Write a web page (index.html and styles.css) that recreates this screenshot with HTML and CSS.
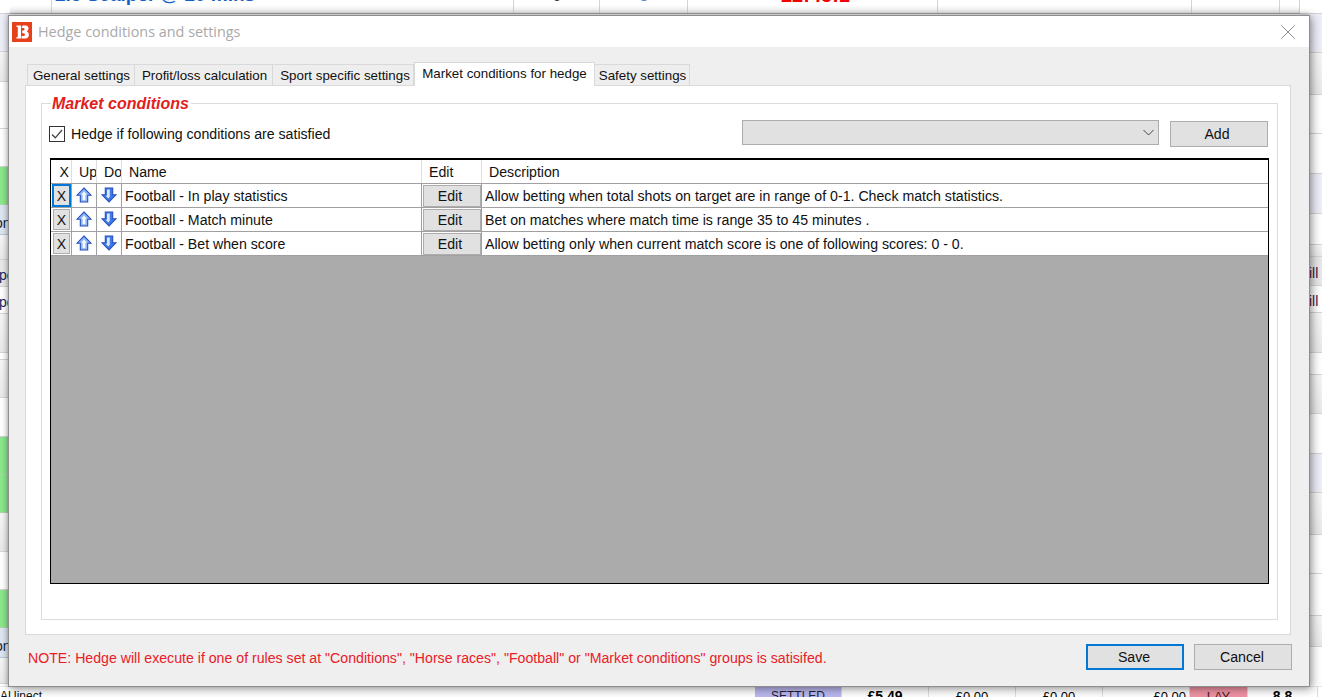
FILE: index.html
```html
<!DOCTYPE html>
<html lang="en">
<head>
<meta charset="utf-8">
<title>Hedge conditions and settings</title>
<link rel="stylesheet" href="styles.css">
</head>
<body>
<div class="desk">
  <div class="desk-main">
    <div class="strip strip-left">
      <div class="band h14 white"></div>
      <div class="band h38 lav"></div>
      <div class="band h30 grad"></div>
      <div class="band h47 white"></div>
      <div class="band h38 white"></div>
      <div class="band h38 green"></div>
      <div class="band h30 blue"><span class="clip-text tl low">on</span></div>
      <div class="band h25 grad"></div>
      <div class="band h27 grey"><span class="clip-text tp navy">pe</span></div>
      <div class="band h27 white"><span class="clip-text tp navy">pe</span></div>
      <div class="band h39 grad"></div>
      <div class="band h7 white"></div>
      <div class="band h38 grad"></div>
      <div class="band h39 white"></div>
      <div class="band h38 green"></div>
      <div class="band h38 green"></div>
      <div class="band h39 grad"></div>
      <div class="band h38 white"></div>
      <div class="band h38 green"></div>
      <div class="band h30 blue"><span class="clip-text tl low">on</span></div>
      <div class="band h26 grad"></div>
    </div>
    <div class="desk-center">
      <div class="top-row">
        <div class="top-cell c1"></div>
        <div class="top-cell c2"><span class="scalper">2.5 Scalper @ 20 mins</span></div>
        <div class="top-cell c3"><span class="dot dark"></span></div>
        <div class="top-cell c4"><span class="dot"></span></div>
        <div class="top-cell c5"><span class="time">22:45:1</span></div>
        <div class="top-cell c6"></div>
        <div class="top-cell c7"><span class="dot small"></span></div>
        <div class="top-cell c8"></div>
      </div>
    </div>
    <div class="strip strip-right">
      <div class="band h14 white"></div>
      <div class="band h39 lav"></div>
      <div class="band h42 grad"></div>
      <div class="band h39 white"></div>
      <div class="band h40 white"></div>
      <div class="band h40 lav"></div>
      <div class="band h31 white"></div>
      <div class="band h12 grad"></div>
      <div class="band h29 grey"><span class="clip-text tr">ill</span></div>
      <div class="band h27 white"><span class="clip-text tr">ill</span></div>
      <div class="band h40 grad"></div>
      <div class="band h22 white"></div>
      <div class="band h39 grad"></div>
      <div class="band h40 white"></div>
      <div class="band h39 lav"></div>
      <div class="band h42 grad"></div>
      <div class="band h39 white"></div>
      <div class="band h42 white"></div>
      <div class="band h31 grad"></div>
    </div>
  </div>
  <div class="bottom-row">
    <div class="bot-cell b-name">AUinect</div>
    <div class="bot-cell b-status">SETTLED</div>
    <div class="bot-cell b-money strong">£5.49</div>
    <div class="bot-cell b-money">£0.00</div>
    <div class="bot-cell b-money">£0.00</div>
    <div class="bot-cell b-money end">£0.00</div>
    <div class="bot-cell b-lay">LAY</div>
    <div class="bot-cell b-odds strong">8.8</div>
  </div>
</div>

<div class="dialog">
  <header class="titlebar">
    <svg class="logo" width="20" height="20" viewBox="0 0 20 20" aria-hidden="true">
      <rect width="20" height="20" fill="#e8401c"/>
      <path d="M4.500 3.500h4.500v13H4.500v-1.500h1.300V5H4.500zM10.500 3.500h3c1.800 0 3 1.100 3 2.800 0 1.400-.6 2.500-1.700 3.200 1.300.6 2.100 1.800 2.100 3.200 0 2.300-1.400 3.800-3.500 3.800h-3.900v-2.500h2c.9 0 1.400-.5 1.400-1.300 0-.9-.6-1.400-1.500-1.400h-1.200V8.600h1c.8 0 1.300-.5 1.300-1.200 0-.8-.5-1.300-1.300-1.300h-1.700z" fill="#fff"/>
    </svg>
    <span class="title">Hedge conditions and settings</span>
    <svg class="close" width="14" height="14" viewBox="0 0 14 14" aria-hidden="true">
      <path d="M.5.500l13 13M13.500.500l-13 13" stroke="#8f8f8f" fill="none"/>
    </svg>
  </header>
  <div class="body">
    <div class="tabs">
      <div class="tab t1">General settings</div>
      <div class="tab t2">Profit/loss calculation</div>
      <div class="tab t3">Sport specific settings</div>
      <div class="tab active">Market conditions for hedge</div>
      <div class="tab t5">Safety settings</div>
    </div>
    <div class="pane">
      <section class="group">
        <div class="legend">Market conditions</div>
        <div class="toolbar">
          <label class="check">
            <span class="box">
              <svg width="14" height="14" viewBox="0 0 14 14" aria-hidden="true"><path d="M2 7.500l3.300 3.300L12 3" stroke="#444" stroke-width="1.300" fill="none"/></svg>
            </span>
            Hedge if following conditions are satisfied
          </label>
          <div class="combo">
            <svg width="11" height="7" viewBox="0 0 11 7" aria-hidden="true"><path d="M.5 1l5 5 5-5" stroke="#444" fill="none"/></svg>
          </div>
          <div class="btn add">Add</div>
        </div>
        <div class="grid">
          <div class="row head">
            <div class="cell center">X</div>
            <div class="cell clipped">Up</div>
            <div class="cell clipped">Down</div>
            <div class="cell pad">Name</div>
            <div class="cell pad">Edit</div>
            <div class="cell pad">Description</div>
          </div>
          <div class="row">
            <div class="cell tight"><div class="xbtn focus">X</div></div>
            <div class="cell tight"><svg class="arrow" width="16" height="16" viewBox="0 0 16 16"><path d="M8 1L15 8.200h-3.300V15H4.300V8.200H1z" fill="#8db7f4" stroke="#2a4fc0" stroke-width="1.100"/><path d="M8 4.500l2.800 3.300H9.400v5.400H6.600V7.800H5.200z" fill="#f4f8ff"/></svg></div>
            <div class="cell tight"><svg class="arrow dn" width="16" height="16" viewBox="0 0 16 16"><path d="M4.300 1h7.400v6.800H15L8 15 1 7.800h3.300z" fill="#3f7ae6" stroke="#2a4fc0" stroke-width="1.100"/><path d="M6 2.500h2.800v7L7.500 11.500 4.500 8.800H6z" fill="#dbe8fb"/></svg></div>
            <div class="cell">Football - In play statistics</div>
            <div class="cell tight"><div class="edit">Edit</div></div>
            <div class="cell">Allow betting when total shots on target are in range of 0-1. Check match statistics.</div>
          </div>
          <div class="row">
            <div class="cell tight"><div class="xbtn">X</div></div>
            <div class="cell tight"><svg class="arrow" width="16" height="16" viewBox="0 0 16 16"><path d="M8 1L15 8.200h-3.300V15H4.300V8.200H1z" fill="#8db7f4" stroke="#2a4fc0" stroke-width="1.100"/><path d="M8 4.500l2.800 3.300H9.400v5.400H6.600V7.800H5.200z" fill="#f4f8ff"/></svg></div>
            <div class="cell tight"><svg class="arrow dn" width="16" height="16" viewBox="0 0 16 16"><path d="M4.300 1h7.400v6.800H15L8 15 1 7.800h3.300z" fill="#3f7ae6" stroke="#2a4fc0" stroke-width="1.100"/><path d="M6 2.500h2.800v7L7.500 11.500 4.500 8.800H6z" fill="#dbe8fb"/></svg></div>
            <div class="cell">Football - Match minute</div>
            <div class="cell tight"><div class="edit">Edit</div></div>
            <div class="cell">Bet on matches where match time is range 35 to 45 minutes .</div>
          </div>
          <div class="row">
            <div class="cell tight"><div class="xbtn">X</div></div>
            <div class="cell tight"><svg class="arrow" width="16" height="16" viewBox="0 0 16 16"><path d="M8 1L15 8.200h-3.300V15H4.300V8.200H1z" fill="#8db7f4" stroke="#2a4fc0" stroke-width="1.100"/><path d="M8 4.500l2.800 3.300H9.400v5.400H6.600V7.800H5.200z" fill="#f4f8ff"/></svg></div>
            <div class="cell tight"><svg class="arrow dn" width="16" height="16" viewBox="0 0 16 16"><path d="M4.300 1h7.400v6.800H15L8 15 1 7.800h3.300z" fill="#3f7ae6" stroke="#2a4fc0" stroke-width="1.100"/><path d="M6 2.500h2.800v7L7.500 11.500 4.500 8.800H6z" fill="#dbe8fb"/></svg></div>
            <div class="cell">Football - Bet when score</div>
            <div class="cell tight"><div class="edit">Edit</div></div>
            <div class="cell">Allow betting only when current match score is one of following scores: 0 - 0.</div>
          </div>
        </div>
      </section>
    </div>
    <footer class="foot">
      <p class="note">NOTE: Hedge will execute if one of rules set at "Conditions", "Horse races", "Football" or "Market conditions" groups is satisifed.</p>
      <div class="btn save">Save</div>
      <div class="btn cancel">Cancel</div>
    </footer>
  </div>
</div>
</body>
</html>
```

FILE: styles.css
```css
* { box-sizing: border-box; }
html, body { margin: 0; padding: 0; width: 1322px; height: 697px; overflow: hidden; background: #fff; }
body { font-family: "Liberation Sans", Arial, sans-serif; font-size: 14.15px; color: #000; position: relative; }

/* backdrop application */
.desk { width: 1322px; height: 697px; display: flex; flex-direction: column; overflow: hidden; }
.desk-main { display: flex; height: 686px; }
.strip { width: 10px; display: flex; flex-direction: column; overflow: hidden; flex: none; }
.strip-right { width: 22px; }
.desk-center { flex: 1; min-width: 0; }
.band { border-bottom: 1px solid #d4d4d4; flex: none; position: relative; display: flex; align-items: center; overflow: hidden; }
.white { background: #fff; }
.lav { background: #eeeef9; }
.grad { background: linear-gradient(#f6f6f6, #e9e9ea); }
.grey { background: #e8e8e8; }
.green { background: #8ce68c; border-bottom-color: #a8d8a8; }
.blue { background: #dde5f0; border-bottom-color: #b7c4d8; }
.h7 { height: 7px; } .h12 { height: 12px; } .h14 { height: 14px; } .h22 { height: 22px; }
.h25 { height: 25px; } .h26 { height: 26px; } .h27 { height: 27px; } .h29 { height: 29px; }
.h30 { height: 30px; } .h31 { height: 31px; } .h38 { height: 38px; } .h39 { height: 39px; }
.h40 { height: 40px; } .h42 { height: 42px; } .h47 { height: 47px; }
.clip-text { font-size: 14px; color: #123; white-space: nowrap; }
.navy { color: #0c2a6a; }
.tl { margin-left: -5px; }
.low { padding-top: 6px; }
.tp { margin-left: -1px; padding-top: 3px; }
.tr { margin-left: 9px; color: #4a1048; padding-top: 4px; }

.top-row { display: flex; height: 14px; border-bottom: 1px solid #a9a9a9; background: linear-gradient(#fff 40%, #e8e8e8); overflow: hidden; }
.top-cell { flex: none; border-right: 1px solid #d2d2d2; display: flex; align-items: flex-end; justify-content: center; padding-bottom: 7px; }
.c1 { width: 42px; }
.c2 { width: 462px; justify-content: flex-start; padding-left: 3px; }
.c3 { width: 86px; }
.c4 { width: 88px; }
.c5 { width: 250px; justify-content: flex-start; padding-left: 93px; }
.c6 { width: 254px; }
.c7 { width: 88px; }
.c8 { width: 20px; }
.scalper { font-size: 19px; font-weight: 700; color: #1560c8; white-space: nowrap; line-height: 22px; }
.time { font-size: 20px; font-weight: 700; color: #f40000; white-space: nowrap; line-height: 22px; }
.dot { width: 12px; height: 12px; border-radius: 50%; background: #4d86d0; flex: none; margin-bottom: 5px; }
.dot.dark { background: #333; width: 6px; height: 6px; margin-bottom: 5px; }
.dot.small { width: 6px; height: 6px; margin-bottom: 6px; background: #2060c0; }

.bottom-row { display: flex; height: 11px; overflow: hidden; background: #fff; border-top: 1px solid #e6e6e6; }
.bot-cell { flex: none; height: 18px; line-height: 15px; padding-top: 2px; font-size: 13px; text-align: center; border-right: 1px solid #ddd; white-space: nowrap; }
.b-name { width: 755px; text-align: left; color: #111; border: 0; font-size: 12px; }
.b-status { width: 87px; background: #bbb8f0; color: #223; font-size: 12px; }
.b-money { width: 87px; }
.b-money.end { text-align: right; padding-right: 3px; }
.b-lay { width: 58px; background: #f093a4; color: #422; }
.b-odds { width: 70px; }
.strong { font-weight: 700; font-size: 14px; }

/* dialog window */
.dialog { position: absolute; left: 8px; top: 15px; width: 1302px; height: 672px; border: 1px solid #8e8e8e; background: #efefef; box-shadow: 2px 2px 9px rgba(0, 0, 0, .4), -1px -1px 4px rgba(0, 0, 0, .18); display: flex; flex-direction: column; }
.titlebar { height: 31px; background: #fff; display: flex; align-items: center; padding: 0 14px 0 3px; flex: none; }
.logo { flex: none; margin-top: 1px; }
.title { margin-left: 6px; font-family: "Open Sans", sans-serif; font-size: 14.4px; color: #a9a9a9; flex: 1; }
.close { flex: none; }

.body { flex: 1; padding: 15px 18px 0 16px; display: flex; flex-direction: column; }
.tabs { display: flex; height: 23px; flex: none; align-items: flex-start; position: relative; z-index: 1; padding-left: 2px; }
.tab { height: 21px; margin-top: 2px; background: #eee; border: 1px solid #d9d9d9; border-bottom: 0; border-left-width: 0; line-height: 21px; font-size: 13.33px; text-align: center; white-space: nowrap; color: #111; }
.t1 { width: 108px; border-left-width: 1px; padding-left: 1px; }
.t2 { width: 138px; padding-left: 2px; }
.t3 { width: 141px; padding-left: 4px; }
.active { width: 181px; height: 24px; margin-top: 0; background: #fff; border-left-width: 1px; line-height: 21px; }
.t5 { width: 95px; padding-left: 1px; }
.pane { height: 550px; flex: none; background: #fff; border: 1px solid #d9d9d9; padding: 17px 12px 13px 15px; }
.group { height: 517px; border: 1px solid #dcdcdc; padding: 0 8px 0 8px; }
.legend { width: fit-content; margin: -9px 0 0 1px; padding: 0 2px 0 1px; background: #fff; font-size: 16px; line-height: 18px; font-weight: 700; font-style: italic; color: #e2201c; }
.toolbar { display: flex; align-items: center; margin-top: -3px; height: 48px; padding: 0 1px 0 0; }
.check { display: flex; align-items: center; gap: 6px; margin-left: -1px; flex: none; width: 693px; color: #111; }
.box { width: 16px; height: 16px; border: 1px solid #333; background: #fff; display: flex; align-items: center; justify-content: center; flex: none; }
.combo { width: 417px; height: 25px; background: #e1e1e1; border: 1px solid #adadad; display: flex; align-items: center; justify-content: flex-end; padding-right: 4px; margin-top: -4px; flex: none; }
.btn { height: 26px; background: #e1e1e1; border: 1px solid #adadad; line-height: 24px; text-align: center; width: 98px; flex: none; color: #111; padding-right: 2px; }
.add { margin-left: 11px; padding-right: 4px; }

.grid { height: 426px; border: 1px solid #000; border-top-width: 2px; background: #ababab; }
.row { display: grid; grid-template-columns: 20px 25px 25px 300px 60px 1fr; height: 24px; padding: 0 1px; background: #fff; border-bottom: 1px solid #a0a0a0; }
.cell { padding-left: 3px; line-height: 24px; white-space: nowrap; overflow: hidden; border-right: 1px solid #a0a0a0; color: #111; }
.cell:last-child { border-right: 0; }
.head .cell { border-right-color: #dedede; line-height: 24px; }
.center { text-align: right; padding-right: 2px; }
.clipped { padding: 0 0 0 7px; }
.pad { padding-left: 7px; }
.tight { padding: 0; display: flex; align-items: center; justify-content: center; }
.xbtn { width: 17px; height: 21px; background: #e1e1e1; border: 1px solid #adadad; line-height: 20px; text-align: center; font-size: 14px; flex: none; }
.xbtn.focus { width: 19px; height: 23px; border: 2px solid #0078d7; line-height: 20px; }
.arrow { display: block; flex: none; margin-top: -1px; }
.edit { width: 58px; height: 22px; background: #e1e1e1; border: 1px solid #adadad; line-height: 21px; text-align: center; flex: none; padding-right: 3px; }

.foot { flex: 1; display: flex; align-items: flex-start; }
.note { margin: 15px 0 0 3px; color: #ea2027; width: 1058px; flex: none; white-space: nowrap; line-height: 16px; }
.foot .btn { margin-top: 9px; }
.save { border: 2px solid #0078d7; line-height: 22px; }
.cancel { margin-left: 10px; }
```
